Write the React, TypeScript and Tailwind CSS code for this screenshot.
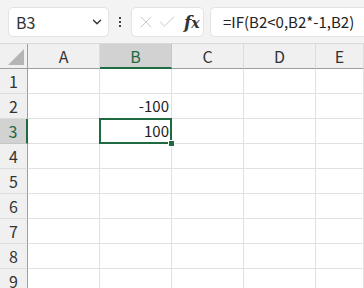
import { ChevronDown, X, Check } from "lucide-react";

const cols = ["A", "B", "C", "D", "E"];
const rows = [1, 2, 3, 4, 5, 6, 7, 8, 9];

const values: Record<string, string> = {
  B2: "-100",
  B3: "100",
};

function Toolbar() {
  return (
    <div className="flex h-[43px] items-center gap-[6px] bg-[#f3f3f3] pl-[8px] pt-[1px]">
      <div className="flex h-[30px] w-[101px] items-center justify-between rounded-[5px] border border-[#e3e3e3] bg-white pl-[7px] pr-[4px]">
        <span className="text-[16px] text-[#333]">B3</span>
        <ChevronDown className="h-[14px] w-[14px] text-[#333]" strokeWidth={2.4} />
      </div>
      <div className="flex w-[10px] flex-col items-center gap-[2px]">
        <span className="h-[2px] w-[2px] bg-[#444]" />
        <span className="h-[2px] w-[2px] bg-[#444]" />
        <span className="h-[2px] w-[2px] bg-[#444]" />
      </div>
      <div className="flex h-[30px] w-[73px] items-center rounded-[5px] border border-[#e3e3e3] bg-white pl-[4px]">
        <X className="h-[20px] w-[20px] text-[#c4c4c4]" strokeWidth={1.1} />
        <Check className="ml-[1px] h-[20px] w-[20px] text-[#c4c4c4]" strokeWidth={1.1} />
        <span className="ml-[7px] font-['DejaVu_Serif',serif] text-[17px] font-bold italic leading-none text-[#333]">
          f<span className="text-[14px]">x</span>
        </span>
      </div>
      <div className="flex h-[30px] flex-1 items-center rounded-l-[5px] border border-r-0 border-[#e3e3e3] bg-white pl-[12px]">
        <span className="whitespace-nowrap text-[15px] text-[#222]">=IF(B2&lt;0,B2*-1,B2)</span>
      </div>
    </div>
  );
}

export default function App() {
  return (
    <div className="h-[288px] w-[364px] overflow-hidden bg-white font-['Noto_Sans_CJK_JP','Noto_Sans',sans-serif]">
      <Toolbar />
      <div className="grid grid-cols-[28px_72px_72px_72px_72px_1fr] grid-rows-[25px_repeat(9,25px)] border-t border-[#dadada]">
        <div className="relative border-b border-r border-b-[#9e9e9e] border-r-[#9e9e9e] bg-[#f0f0f0]">
          <div className="absolute bottom-[3px] right-[3px] h-[16px] w-[16px] bg-[#b5b5b5] [clip-path:polygon(100%_0,100%_100%,0_100%)]" />
        </div>
        {cols.map((c) =>
          c === "B" ? (
            <div
              key={c}
              className="flex items-center justify-center border-b-2 border-r border-b-[#1e6b41] border-r-[#c6c6c6] bg-[#d2d2d2] pt-[1px] text-[16px] text-[#1e6b41]"
            >
              {c}
            </div>
          ) : (
            <div
              key={c}
              className="flex items-center justify-center border-b border-r border-b-[#9e9e9e] border-r-[#dcdcdc] bg-[#f0f0f0] text-[16px] text-[#333]"
            >
              {c}
            </div>
          )
        )}
        {rows.map((r) => (
          <Row key={r} r={r} />
        ))}
      </div>
    </div>
  );
}

function Row({ r }: { r: number }) {
  const selected = r === 3;
  return (
    <>
      <div
        className={
          selected
            ? "flex items-center justify-center border-b border-r-2 border-b-[#c6c6c6] border-r-[#1e6b41] bg-[#d2d2d2] text-[16px] text-[#1e6b41]"
            : "flex items-center justify-center border-b border-r border-b-[#dcdcdc] border-r-[#9e9e9e] bg-[#f0f0f0] text-[16px] text-[#333]"
        }
      >
        {r}
      </div>
      {cols.map((c) => {
        const key = `${c}${r}`;
        const isActive = key === "B3";
        return (
          <div
            key={key}
            className={
              isActive
                ? "relative z-10 flex items-center justify-end border-b border-r border-[#e1e1e1] pr-[2px] text-[15px] text-[#222]"
                : "relative flex items-center justify-end border-b border-r border-[#e1e1e1] pr-[2px] text-[15px] text-[#222]"
            }
          >
            {values[key]}
            {isActive && (
              <>
                <div className="absolute -left-[1px] -top-[1px] bottom-[-1px] right-[-1px] border-2 border-[#1e6b41]" />
                <div className="absolute -bottom-[4px] -right-[4px] h-[7px] w-[7px] border border-white bg-[#1e6b41]" />
              </>
            )}
          </div>
        );
      })}
    </>
  );
}
